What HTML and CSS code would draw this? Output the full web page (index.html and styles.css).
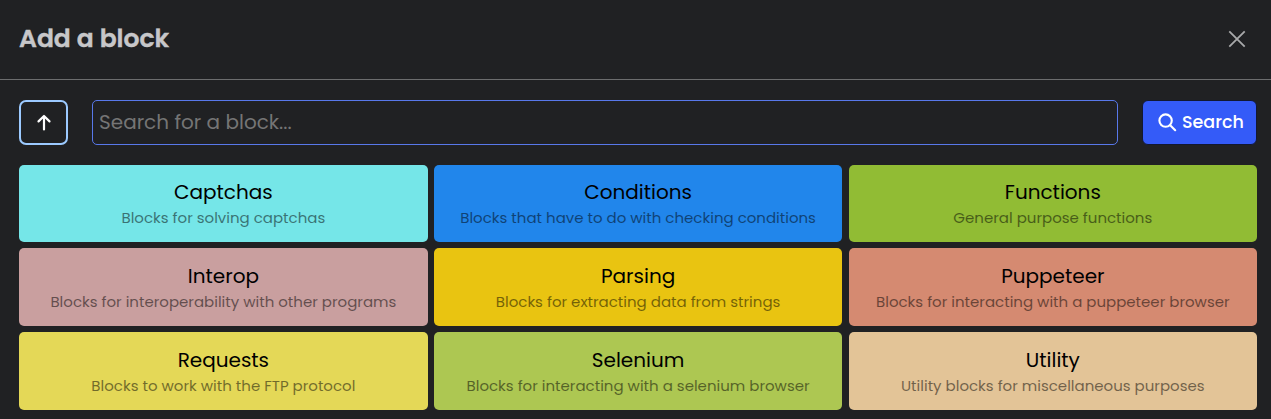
FILE: index.html
```html
<!DOCTYPE html>
<html lang="en">
<head>
<meta charset="utf-8">
<title>Add a block</title>
<link rel="stylesheet" href="styles.css">
</head>
<body>
<header class="modal-header">
  <h1 class="modal-title"><span>Add a block</span></h1>
  <button class="close" aria-label="Close"><svg width="18" height="18" viewBox="0 0 18 18"><path d="M1.3 1.3l15.4 15.4M16.7 1.3l-15.4 15.4"/></svg></button>
</header>
<main class="modal-body">
  <div class="toolbar">
    <button class="up" aria-label="Up"><svg width="16" height="18" viewBox="0 0 16 18"><path d="M8 15.5V2.2M2.5 7.4L8 2L13.5 7.4"/></svg></button>
    <input class="search-input" type="text" placeholder="Search for a block...">
    <button class="search-button"><svg width="19" height="19" viewBox="0 0 19 19"><circle cx="7.6" cy="7.6" r="6.2"/><path d="M12.2 12.2l5 5"/></svg><span>Search</span></button>
  </div>
  <div class="grid">
    <div class="card captchas"><span class="name">Captchas</span><span class="desc">Blocks for solving captchas</span></div>
    <div class="card conditions"><span class="name">Conditions</span><span class="desc">Blocks that have to do with checking conditions</span></div>
    <div class="card functions"><span class="name">Functions</span><span class="desc">General purpose functions</span></div>
    <div class="card interop"><span class="name">Interop</span><span class="desc">Blocks for interoperability with other programs</span></div>
    <div class="card parsing"><span class="name">Parsing</span><span class="desc">Blocks for extracting data from strings</span></div>
    <div class="card puppeteer"><span class="name">Puppeteer</span><span class="desc">Blocks for interacting with a puppeteer browser</span></div>
    <div class="card requests"><span class="name">Requests</span><span class="desc">Blocks to work with the FTP protocol</span></div>
    <div class="card selenium"><span class="name">Selenium</span><span class="desc">Blocks for interacting with a selenium browser</span></div>
    <div class="card utility"><span class="name">Utility</span><span class="desc">Utility blocks for miscellaneous purposes</span></div>
  </div>
</main>
</body>
</html>
```
FILE: styles.css
```css
* { box-sizing: border-box; }
body { margin: 0; height: 419px; overflow: hidden; background: #202123; font-family: Poppins, Inter, sans-serif; }
button { font-family: inherit; padding: 0; cursor: pointer; }
svg { display: block; fill: none; stroke: currentColor; flex: none; }
.modal-header { height: 80px; border-bottom: 1px solid #6c6d6e; padding: 0 25px 1px 19px; display: flex; align-items: center; justify-content: space-between; }
.modal-title { margin: 0; font-size: 25px; font-weight: 600; line-height: 38px; color: #c7c7c9; -webkit-text-stroke: .4px #c7c7c9; }
.close { border: 0; background: none; color: #a8a9aa; }
.close svg { stroke-width: 1.8; }
.modal-body { padding: 20px 14px 0 19.2px; }
.toolbar { display: flex; align-items: center; height: 45px; margin-left: -.2px; }
.up { width: 49px; height: 45px; border: 2px solid #9ccaff; border-radius: 7px; background: #202123; color: #fff; display: flex; align-items: center; justify-content: center; margin-right: 24px; }
.up svg { stroke-width: 2.2; stroke-linecap: round; stroke-linejoin: round; }
.search-input { flex: 1; min-width: 0; height: 45px; border: 1px solid #5878ea; border-radius: 5px; background: #202123; color: #fff; font-family: inherit; font-size: 20px; padding: 0 6px 2px; outline: 0; }
.search-input::placeholder { color: #757575; opacity: 1; }
.search-button { width: 115px; height: 45px; margin: 0 0 0 24px; border: 1px solid #121832; border-radius: 6px; background: #345bf8; color: #fff; font-size: 17.5px; font-weight: 500; display: flex; align-items: center; padding: 0 0 1px 14.5px; gap: 5.5px; }
.search-button svg { stroke-width: 2.1; stroke-linecap: round; }
.grid { display: grid; grid-template-columns: repeat(3, 1fr); grid-auto-rows: 77.6px; gap: 6px 6.4px; margin-top: 19.8px; }
.card { border-radius: 5px; color: #000; text-align: center; display: flex; flex-direction: column; align-items: center; padding-top: 12.6px; white-space: nowrap; }
.name { font-size: 20px; line-height: 30px; }
.desc { font-size: 15px; line-height: 22px; opacity: .5; }
.captchas { background: #75e6e8; }
.conditions { background: #2186eb; }
.functions { background: #91bc34; }
.interop { background: #c99f9f; }
.parsing { background: #e9c411; }
.puppeteer { background: #d58a71; }
.requests { background: #e4d857; }
.selenium { background: #adc752; }
.utility { background: #e3c497; }
```
